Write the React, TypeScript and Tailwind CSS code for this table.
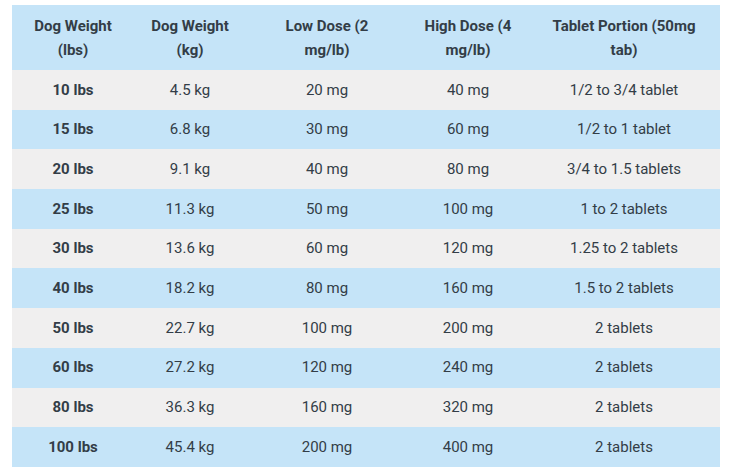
const rows = [
  ['10 lbs', '4.5 kg', '20 mg', '40 mg', '1/2 to 3/4 tablet'],
  ['15 lbs', '6.8 kg', '30 mg', '60 mg', '1/2 to 1 tablet'],
  ['20 lbs', '9.1 kg', '40 mg', '80 mg', '3/4 to 1.5 tablets'],
  ['25 lbs', '11.3 kg', '50 mg', '100 mg', '1 to 2 tablets'],
  ['30 lbs', '13.6 kg', '60 mg', '120 mg', '1.25 to 2 tablets'],
  ['40 lbs', '18.2 kg', '80 mg', '160 mg', '1.5 to 2 tablets'],
  ['50 lbs', '22.7 kg', '100 mg', '200 mg', '2 tablets'],
  ['60 lbs', '27.2 kg', '120 mg', '240 mg', '2 tablets'],
  ['80 lbs', '36.3 kg', '160 mg', '320 mg', '2 tablets'],
  ['100 lbs', '45.4 kg', '200 mg', '400 mg', '2 tablets'],
];

const headers = [
  ['Dog Weight', '(lbs)'],
  ['Dog Weight', '(kg)'],
  ['Low Dose (2', 'mg/lb)'],
  ['High Dose (4', 'mg/lb)'],
  ['Tablet Portion (50mg', 'tab)'],
];

const widths = ['w-[122px]', 'w-[112px]', 'w-[162px]', 'w-[120px]', 'w-[192px]'];

export default function App() {
  return (
    <div className="w-[746px] h-[475px] bg-white pt-[5px] pl-[12px] font-['Roboto',sans-serif] text-[#333d47] text-[15px]">
      <table className="w-[708px] table-fixed border-collapse">
        <thead>
          <tr className="bg-[#c5e4f8] h-[65px]">
            {headers.map((h, i) => (
              <th key={i} className={`${widths[i]} font-bold leading-[24px] text-center align-middle`}>
                {h[0]}
                <br />
                {h[1]}
              </th>
            ))}
          </tr>
        </thead>
        <tbody>
          {rows.map((r, i) => (
            <tr key={i} className={`h-[39.7px] ${i % 2 === 0 ? 'bg-[#f0efef]' : 'bg-[#c5e4f8]'}`}>
              {r.map((c, j) => (
                <td key={j} className={`text-center align-middle p-0 ${j === 0 ? 'font-bold' : ''}`}>
                  {c}
                </td>
              ))}
            </tr>
          ))}
        </tbody>
      </table>
    </div>
  );
}
